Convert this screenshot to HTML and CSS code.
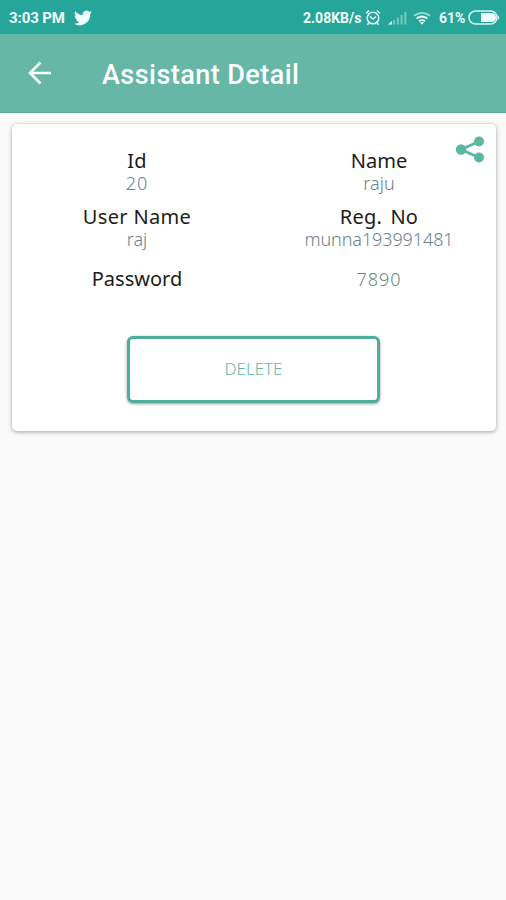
FILE: index.html
```html
<!DOCTYPE html>
<html lang="en">
<head>
<meta charset="utf-8">
<title>Assistant Detail</title>
<link rel="stylesheet" href="styles.css">
</head>
<body>
<div class="status">
  <span class="time">3:03 PM</span>
  <svg class="bird" width="18" height="16" viewBox="0 0 24 20"><path d="M24 2.4a10 10 0 0 1-2.8.8A5 5 0 0 0 23.300.5a10 10 0 0 1-3.100 1.200A4.900 4.900 0 0 0 11.800 6.200 14 14 0 0 1 1.700 1a4.900 4.900 0 0 0 1.500 6.600A5 5 0 0 1 1 7a4.900 4.900 0 0 0 3.900 4.900 5 5 0 0 1-2.200.1 4.900 4.900 0 0 0 4.600 3.400A10 10 0 0 1 0 17.500 14 14 0 0 0 21.500 5z"/></svg>
  <span class="speed">2.08KB/s</span>
  <svg class="alarm" width="16" height="17" viewBox="0 0 16 17"><circle cx="8" cy="9" r="5.800"/><path d="M1.200 4.200 4 1.500M14.800 4.200 12 1.500M3.800 14l-1.400 1.800M12.200 14l1.400 1.800M5 7.500 8 10l3-2.500"/></svg>
  <svg class="signal" width="19" height="14" viewBox="0 0 19 14"><path d="M0 13.500 4 10v3.500z"/><path class="dim" d="M5 13.500V9h2v4.500zM8.800 13.500V6.500h2v7zM12.600 13.500V4h2v9.500zM16.400 13.500V1h2v12.500z"/></svg>
  <svg class="wifi" width="18" height="14" viewBox="0 0 18 14"><path class="dim" d="M1 4.800q8-6 16 0"/><path d="M3.600 7.500q5.400-4 10.800 0M6 10.200q3-2.200 6 0"/><path class="dot" d="M7 11.500q2-1.200 4 0l-2 2.200z"/></svg>
  <span class="percent">61%</span>
  <svg class="battery" width="32" height="15" viewBox="0 0 32 15"><rect class="shell" x="1" y="1" width="28" height="13" rx="6.500"/><path d="M13 3h10.500a4.500 4.500 0 0 1 0 9H13zM30 5q2 2.500 0 5z"/></svg>
</div>
<header class="bar">
  <svg class="back" width="24" height="24" viewBox="0 0 24 24"><path d="M12.500 1.500 2 12l10.500 10.500M2 12h21"/></svg>
  <h1>Assistant Detail</h1>
</header>
<main class="card">
  <svg class="share" width="30" height="28" viewBox="0 0 30 28"><path d="M24 5.500 6 13.500 24 21.500"/><circle cx="6" cy="13.500" r="5.200"/><circle cx="24" cy="5.500" r="5"/><circle cx="24" cy="21.500" r="5"/></svg>
  <dl class="fields">
    <div class="field"><dt class="id">Id</dt><dd class="num">20</dd></div>
    <div class="field"><dt class="name">Name</dt><dd>raju</dd></div>
    <div class="field"><dt class="user">User Name</dt><dd>raj</dd></div>
    <div class="field"><dt class="reg">Reg. No</dt><dd class="code">munna193991481</dd></div>
    <dt class="password">Password</dt>
    <dd class="num">7890</dd>
  </dl>
  <button class="delete">DELETE</button>
</main>
</body>
</html>
```

FILE: styles.css
```css
* { box-sizing: border-box; }
body { margin: 0; min-height: 900px; background: #fafafa; font-family: "Noto Sans", sans-serif; }
.status { height: 34px; padding: 1px 6px 0 9px; display: flex; align-items: center; background: #26a69a; color: #f2fffc; font: 700 14px Roboto, sans-serif; white-space: nowrap; }
.status svg { flex: none; fill: #effffb; }
.time { width: 65px; font-size: 15px; letter-spacing: -.1px; }
.speed { margin-left: auto; width: 62px; }
.status .alarm { margin-right: 7px; fill: none; stroke: #e2faf5; stroke-width: 1.500; }
.signal { margin-right: 6px; }
.signal .dim { opacity: .4; }
.status .wifi { margin-right: 8px; fill: none; stroke: #effffb; stroke-width: 1.800; }
.wifi .dim { opacity: .6; }
.wifi .dot { fill: #effffb; stroke: none; }
.percent { width: 29px; }
.battery .shell { fill: none; stroke: #d8f5ef; stroke-width: 1.500; }
.bar { height: 79px; padding: 0 28px; display: flex; align-items: center; background: #66b7a6; border-bottom: 1px solid #59aa99; color: #fff; }
.back { fill: none; stroke: #fff; stroke-width: 2.600; }
h1 { margin: 3px 0 0 50px; font: 500 27px/36px Roboto, sans-serif; letter-spacing: .45px; white-space: nowrap; }
.card { position: relative; width: 484px; height: 307px; margin: 11px 0 0 12px; padding-top: 25px; background: #fff; border-radius: 5px; box-shadow: 0 1px 4px rgba(0,0,0,.36); }
.share { position: absolute; top: 12px; right: 11px; fill: #5ab7a2; }
.share path { fill: none; stroke: #5ab7a2; stroke-width: 2.800; }
.fields { margin: 0 -4px 0 4px; display: grid; grid-template-columns: 242px 242px; grid-template-rows: 56px 56px 36px; justify-items: center; text-align: center; white-space: nowrap; }
dt { font-size: 20px; line-height: 24px; color: #1c1c1c; font-weight: 400; }
dd { margin: 0; font-size: 18px; line-height: 20px; color: #6c838e; font-weight: 300; }
.id { letter-spacing: .2px; }
.user { letter-spacing: .35px; }
.reg { letter-spacing: .2px; word-spacing: 3px; }
.num { letter-spacing: 1px; }
.code { letter-spacing: -.1px; }
.fields > dt, .fields > dd { margin-top: 6px; line-height: 24px; }
.delete { display: block; width: 253px; height: 67px; margin: 39px 0 0 115px; padding: 0 0 2px; background: #fff; border: 3px solid #4caf9c; border-radius: 6px; box-shadow: 0 1px 3px rgba(0,0,0,.4); color: #62b7a4; font: 300 17px "Noto Sans", sans-serif; }
```
